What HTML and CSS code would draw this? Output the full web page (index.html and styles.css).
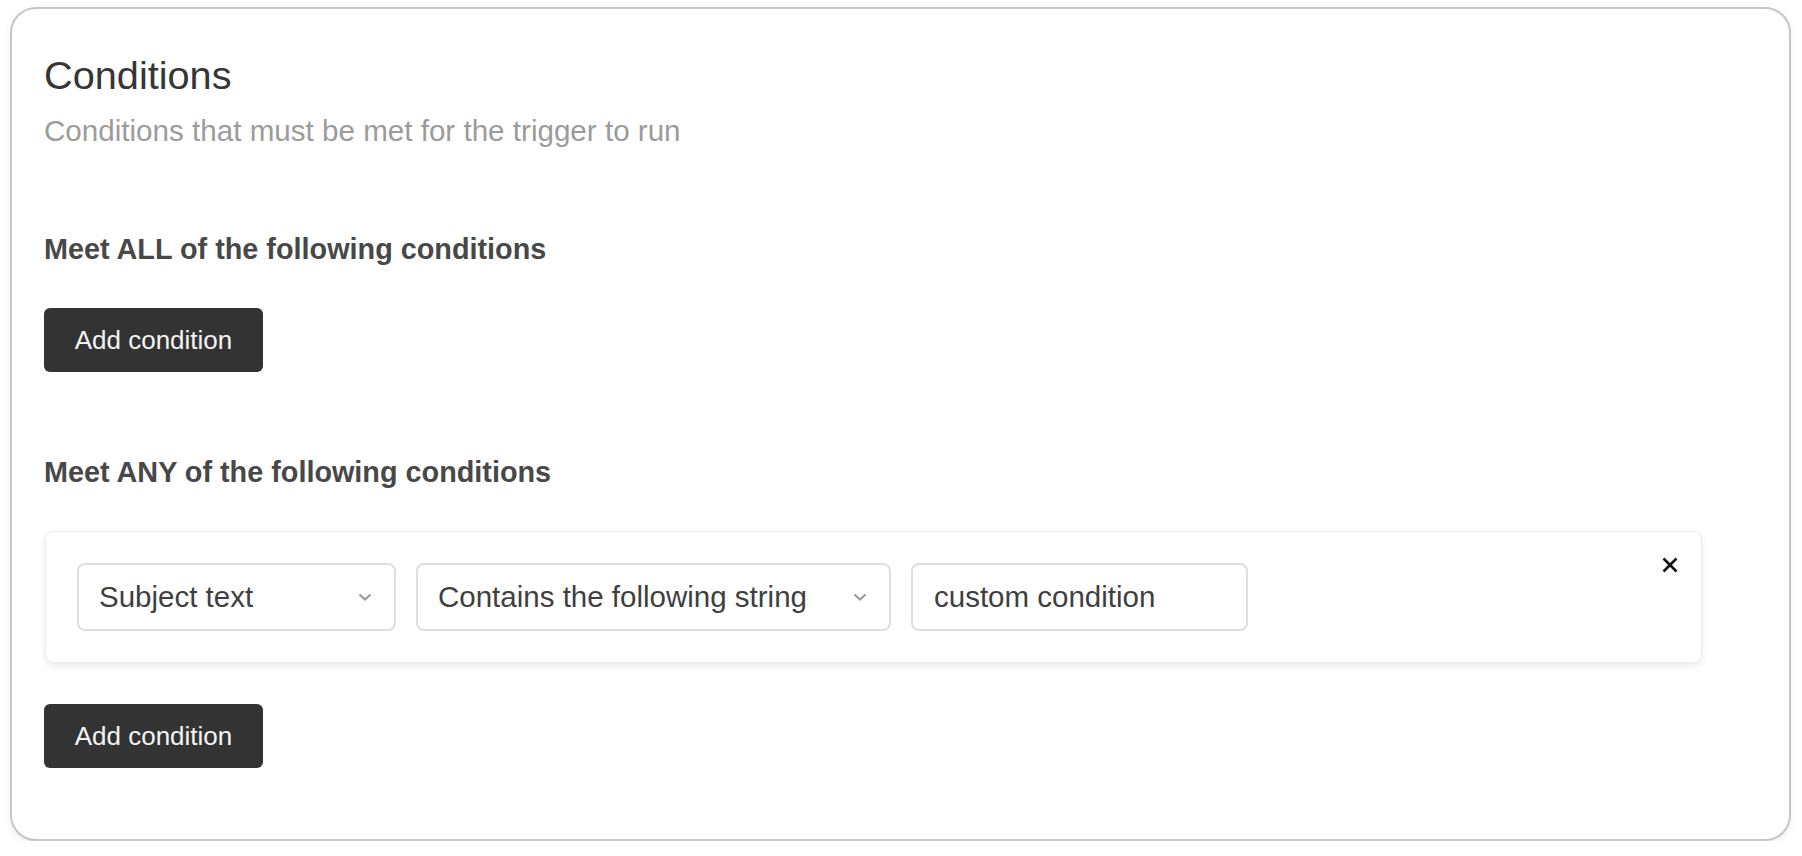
FILE: index.html
```html
<!DOCTYPE html>
<html lang="en">
<head>
<meta charset="utf-8">
<title>Conditions</title>
<link rel="stylesheet" href="styles.css">
</head>
<body>
<section class="card">
  <h1 class="title">Conditions</h1>
  <p class="subtitle">Conditions that must be met for the trigger to run</p>

  <h2 class="group-label group-label--first">Meet ALL of the following conditions</h2>
  <button class="btn" type="button">Add condition</button>

  <h2 class="group-label">Meet ANY of the following conditions</h2>
  <div class="condition">
    <div class="field field--select field--subject">
      <span class="field-text">Subject text</span>
      <svg class="chevron" width="14" height="8" viewBox="0 0 14 8"><path d="M1.5 1.5 L7 6.5 L12.5 1.5" fill="none" stroke="#999999" stroke-width="2.2"/></svg>
    </div>
    <div class="field field--select field--operator">
      <span class="field-text">Contains the following string</span>
      <svg class="chevron" width="14" height="8" viewBox="0 0 14 8"><path d="M1.5 1.5 L7 6.5 L12.5 1.5" fill="none" stroke="#999999" stroke-width="2.2"/></svg>
    </div>
    <div class="field field--input">
      <span class="field-text">custom condition</span>
    </div>
    <button class="remove" type="button" aria-label="Remove condition">
      <svg width="16" height="16" viewBox="0 0 16 16"><path d="M1.5 1.5 L14.5 14.5 M14.5 1.5 L1.5 14.5" stroke="#111" stroke-width="2.6" fill="none"/></svg>
    </button>
  </div>
  <button class="btn btn--last" type="button">Add condition</button>
</section>
</body>
</html>
```

FILE: styles.css
```css
* {
  box-sizing: border-box;
}

html, body {
  margin: 0;
  padding: 0;
  background: #ffffff;
}

body {
  font-family: "Liberation Sans", Arial, Helvetica, sans-serif;
  color: #333333;
  padding: 7px 0 0 10px;
}

.card {
  width: 1781px;
  border: 2px solid #c6c6c6;
  border-radius: 26px;
  background: #ffffff;
  box-shadow: 0 3px 8px rgba(0, 0, 0, 0.07);
  padding: 42px 32px 71px 32px;
  display: flex;
  flex-direction: column;
  align-items: flex-start;
}

.title {
  margin: 0;
  font-size: 39.7px;
  line-height: 48px;
  font-weight: 400;
  color: #363636;
}

.subtitle {
  margin: 12px 0 0 0;
  font-size: 29.6px;
  line-height: 40px;
  color: #9b9b9b;
}

.group-label {
  margin: 82px 0 0 0;
  font-size: 28.8px;
  line-height: 36px;
  font-weight: 700;
  color: #484848;
}

.group-label--first {
  margin-top: 80px;
}

.btn {
  margin-top: 41px;
  width: 219px;
  height: 64px;
  border: none;
  border-radius: 6px;
  background: #333333;
  color: #f4f4f4;
  font-family: "Liberation Sans", Arial, Helvetica, sans-serif;
  font-size: 26px;
  padding: 0;
  display: flex;
  align-items: center;
  justify-content: center;
}

.condition {
  position: relative;
  margin-top: 41px;
  margin-left: 1px;
  width: 1657px;
  border: 1px solid #ececec;
  border-radius: 8px;
  background: #ffffff;
  box-shadow: 0 3px 7px rgba(0, 0, 0, 0.08);
  padding: 31px 31px;
  display: flex;
  gap: 20px;
}

.field {
  height: 68px;
  border: 2px solid #dedede;
  border-radius: 8px;
  background: #ffffff;
  display: flex;
  align-items: center;
  padding: 0 0 0 20px;
  font-size: 29.5px;
  color: #3f3f3f;
}

.field--select {
  justify-content: space-between;
  padding-right: 22px;
}

.field--subject {
  width: 319px;
}

.field--operator {
  width: 475px;
}

.field--input {
  width: 337px;
  padding-left: 21px;
}

.chevron {
  display: block;
  flex: none;
}

.remove {
  position: absolute;
  top: 25px;
  right: 23px;
  width: 16px;
  height: 16px;
  padding: 0;
  border: none;
  background: none;
  display: flex;
}

.btn--last {
  margin-top: 41px;
}
```
